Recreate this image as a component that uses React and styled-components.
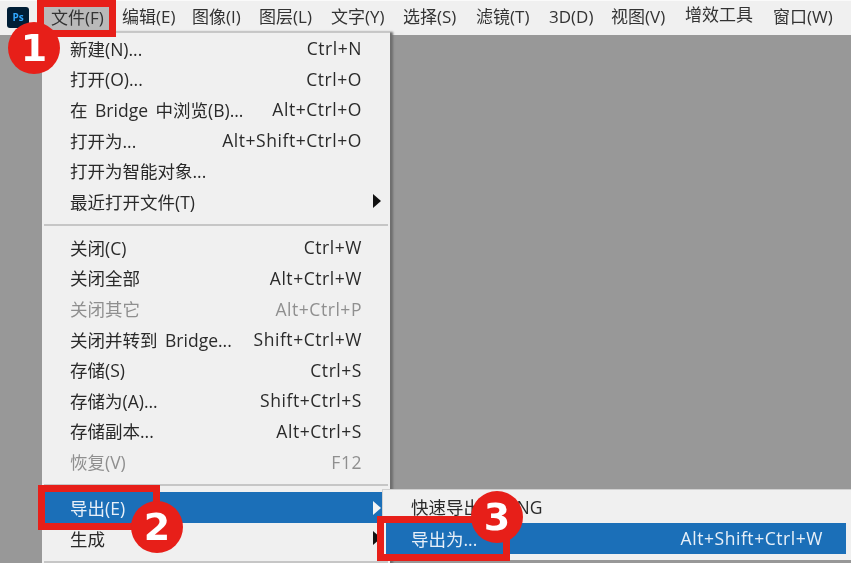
import React from 'react';
import styled, { createGlobalStyle } from 'styled-components';

const GlobalStyle = createGlobalStyle`
  html, body { margin: 0; padding: 0; background: #989898; }
  body { font-family: "Open Sans", "Noto Sans CJK SC", sans-serif; }
`;

const Page = styled.div`
  position: relative;
  width: 851px;
  height: 563px;
  overflow: hidden;
  display: flex;
  flex-direction: column;
  background: #989898;
  filter: blur(0.35px);
`;

const MenuBar = styled.div`
  height: 35px;
  flex: none;
  display: flex;
  align-items: center;
  background: #f0f0f0;
  border-top: 1px solid #fafafa;
  box-sizing: border-box;
  padding-left: 7px;
`;

const Logo = styled.div`
  flex: none;
  width: 22px;
  height: 21px;
  margin-right: 22px;
  margin-top: -2px;
  border-radius: 3px;
  background: #001e36;
  color: #31a8ff;
  font: 700 10px/21px "Open Sans", sans-serif;
  text-align: center;
`;

const MenuItems = styled.div`
  flex: none;
  display: grid;
  grid-template-columns: 71px 70px 67px 72px 72px 73px 73px 62px 74px 88px auto;
  margin-top: -3px;
`;

const MenuItem = styled.span`
  font-size: 17px;
  line-height: 24px;
  color: #333;
  white-space: nowrap;
  margin-top: ${(p) => (p.$raised ? '-2px' : '0')};
`;

const Canvas = styled.div`
  flex: 1;
  background: #989898;
`;

const Menu = styled.div`
  position: absolute;
  left: 42px;
  top: 32px;
  width: 348px;
  height: 540px;
  background: #f0f0f0;
  border-top: 1px solid #c8c8c8;
  box-sizing: border-box;
  box-shadow: 3px 0 2px #6f6f6f;
`;

const Row = styled.div`
  position: relative;
  display: flex;
  align-items: center;
  justify-content: space-between;
  height: 30.6px;
  padding: 0 28px;
  font-size: 17.5px;
  word-spacing: 3px;
  white-space: nowrap;
  color: ${(p) => (p.$active ? '#e8f0f8' : p.$disabled ? '#8f8f8f' : '#2a2a2a')};
  background: ${(p) => (p.$active ? '#1b6fb8' : 'transparent')};
`;

const Keys = styled.span`
  letter-spacing: 0.55px;
`;

const Separator = styled.div`
  height: 2px;
  margin: 7px 2px 6.5px;
  background: #c6c6c6;
`;

const Arrow = styled.span`
  position: absolute;
  right: 9px;
  top: 50%;
  margin-top: -7px;
  border-left: 8px solid ${(p) => (p.$light ? '#f4f4f4' : '#111')};
  border-top: 7px solid transparent;
  border-bottom: 7px solid transparent;
`;

const SubMenu = styled.div`
  position: absolute;
  left: 382px;
  top: 489px;
  width: 469px;
  height: 71px;
  box-sizing: border-box;
  padding: 2.4px 5px 0 3px;
  background: #f0f0f0;
  border-top: 1px solid #d0d0d0;
  border-left: 1px solid #d0d0d0;
`;

const SubRow = styled(Row)`
  padding: 0 23px 0 25px;
`;

const QuickRow = styled(SubRow)`
  padding-bottom: 3px;
  box-sizing: border-box;
`;

const RedBox = styled.div`
  position: absolute;
  left: ${(p) => p.$x}px;
  top: ${(p) => p.$y}px;
  width: ${(p) => p.$w}px;
  height: ${(p) => p.$h}px;
  box-sizing: border-box;
  border: 7px solid #e71f19;
`;

const Badge = styled.div`
  position: absolute;
  left: ${(p) => p.$x - 26}px;
  top: ${(p) => p.$y - 26}px;
  width: 52px;
  height: 52px;
  border-radius: 50%;
  background: #e71f19;
  color: #fff;
  font: 700 38px/52px "DejaVu Sans", sans-serif;
  text-align: center;
`;

const FileHighlight = styled.div`
  position: absolute;
  left: 44px;
  top: 7px;
  width: 65px;
  height: 23px;
  background: #b9b9b9;
`;

const FileLabel = styled(MenuItem)`
  position: absolute;
  left: 51px;
  top: 6px;
`;

const bar = ['编辑(E)', '图像(I)', '图层(L)', '文字(Y)', '选择(S)', '滤镜(T)', '3D(D)', '视图(V)', '增效工具', '窗口(W)'];

const group1 = [
  ['新建(N)...', 'Ctrl+N'],
  ['打开(O)...', 'Ctrl+O'],
  ['在 Bridge 中浏览(B)...', 'Alt+Ctrl+O'],
  ['打开为...', 'Alt+Shift+Ctrl+O'],
  ['打开为智能对象...', ''],
  ['最近打开文件(T)', '', 'arrow'],
];

const group2 = [
  ['关闭(C)', 'Ctrl+W'],
  ['关闭全部', 'Alt+Ctrl+W'],
  ['关闭其它', 'Alt+Ctrl+P', 'disabled'],
  ['关闭并转到 Bridge...', 'Shift+Ctrl+W'],
  ['存储(S)', 'Ctrl+S'],
  ['存储为(A)...', 'Shift+Ctrl+S'],
  ['存储副本...', 'Alt+Ctrl+S'],
  ['恢复(V)', 'F12', 'disabled'],
];

function renderRow([label, keys, flag]) {
  return (
    <Row key={label} $disabled={flag === 'disabled'}>
      <span>{label}</span>
      <Keys>{keys}</Keys>
      {flag === 'arrow' && <Arrow />}
    </Row>
  );
}

export default function App() {
  return (
    <Page>
      <GlobalStyle />
      <MenuBar>
        <Logo>Ps</Logo>
        <MenuItems>
          <span />
          {bar.map((name) => (
            <MenuItem key={name} $raised={name === '增效工具'}>{name}</MenuItem>
          ))}
        </MenuItems>
      </MenuBar>
      <Canvas />

      <FileHighlight />
      <FileLabel>文件(F)</FileLabel>

      <Menu>
        {group1.map(renderRow)}
        <Separator />
        {group2.map(renderRow)}
        <Separator />
        <Row $active>
          <span>导出(E)</span>
          <Arrow $light />
        </Row>
        <Row>
          <span>生成</span>
          <Arrow />
        </Row>
        <Separator />
      </Menu>

      <SubMenu>
        <QuickRow>
          <span>快速导出为 PNG</span>
        </QuickRow>
        <SubRow $active>
          <span>导出为...</span>
          <Keys>Alt+Shift+Ctrl+W</Keys>
        </SubRow>
      </SubMenu>

      <RedBox $x={37} $y={0} $w={79} $h={37} />
      <RedBox $x={38} $y={485} $w={122} $h={45} />
      <RedBox $x={377} $y={516} $w={133} $h={45} />
      <Badge $x={34} $y={48}>1</Badge>
      <Badge $x={157} $y={527}>2</Badge>
      <Badge $x={497} $y={517}>3</Badge>
    </Page>
  );
}
